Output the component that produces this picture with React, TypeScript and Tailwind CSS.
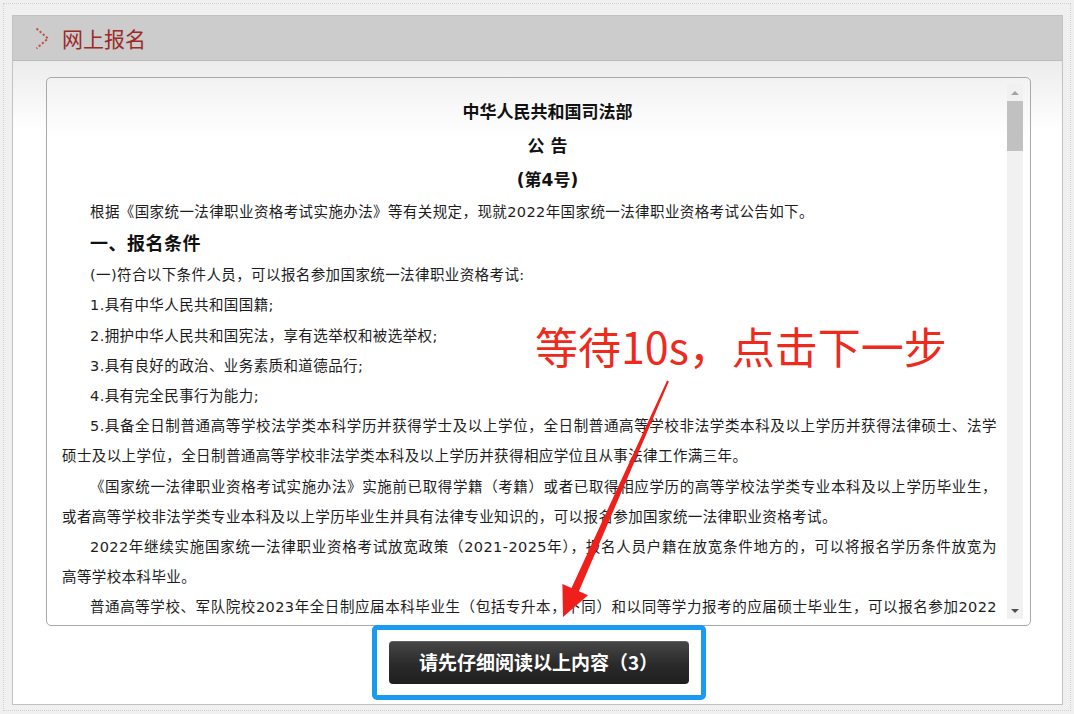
import React from 'react';

const body = "font-['DejaVu_Sans','Noto_Sans_CJK_SC',sans-serif]";

// a line that is justified edge to edge (the line before a wrap)
const Full: React.FC<{ children: React.ReactNode; indent?: boolean }> = ({ children, indent }) => (
  <div className={`text-justify [text-align-last:justify] ${indent ? 'indent-[28px]' : ''}`}>{children}</div>
);

const Line: React.FC<{ children: React.ReactNode; indent?: boolean }> = ({ children, indent }) => (
  <div className={indent ? 'indent-[28px]' : ''}>{children}</div>
);

const Chevron = () => (
  <svg width="15" height="23" viewBox="0 0 15 23" fill="none">
    <polyline points="1.5,1.5 13,11.5 1.5,21.5" stroke="#c0504a" strokeWidth="2" strokeDasharray="2.2 2" />
  </svg>
);

const Scrollbar = () => (
  <div className="w-[16px] shrink-0 bg-[#f1f1f1] flex flex-col items-center">
    <div className="h-[17px] w-full flex items-center justify-center">
      <div className="w-0 h-0 border-l-[4px] border-r-[4px] border-b-[4px] border-l-transparent border-r-transparent border-b-[#a3a3a3]" />
    </div>
    <div className="w-full h-[50px] bg-[#c1c1c1]" />
    <div className="flex-1" />
    <div className="h-[17px] w-full flex items-center justify-center">
      <div className="w-0 h-0 border-l-[4px] border-r-[4px] border-t-[4px] border-l-transparent border-r-transparent border-t-[#505050]" />
    </div>
  </div>
);

export default function App() {
  return (
    <div className="relative w-[1074px] h-[714px] overflow-hidden bg-[#f0f0f0] p-[3px]">
      <div className="h-full border border-dotted border-[#d2d2d2] pl-[8px] pr-[7px] pt-[11px] pb-[5px]">
        <div className="h-full flex flex-col border border-[#c2c2c2] bg-white">
          {/* header */}
          <div className="h-[45px] shrink-0 bg-[#cccccc] border-b border-[#bababa] flex items-center gap-[12px] pl-[22px]">
            <Chevron />
            <span className="font-['Noto_Sans_CJK_SC',sans-serif] text-[21px] leading-none text-[#9a2b29]">网上报名</span>
          </div>

          {/* body */}
          <div className="flex-1 flex flex-col items-center bg-[linear-gradient(#ececec,#ffffff_70px)] pl-[33px] pr-[31px] pt-[16px]">
            <div className="w-full h-[549px] flex border border-[#a9a9a9] rounded-[5px] bg-[linear-gradient(#f2f2f2,#ffffff_60px)] pt-[6px] pb-[6px] pl-[6px] pr-[7px]">
              <div className={`flex-1 min-w-0 overflow-hidden pl-[9px] pr-[10px] pt-[11px] ${body} text-[14.5px] leading-[30.2px] tracking-[0.4px] text-[#1c1c1c]`}>
                <div className="pl-[36px] text-center font-bold text-[17px] leading-[34px] text-[#111] tracking-normal">
                  <div>中华人民共和国司法部</div>
                  <div>公 告</div>
                  <div>(第4号)</div>
                </div>
                <Line indent>根据《国家统一法律职业资格考试实施办法》等有关规定，现就2022年国家统一法律职业资格考试公告如下。</Line>
                <div className="indent-[28px] font-bold text-[18px] leading-[33px] text-[#111] tracking-[0.5px]">一、报名条件</div>
                <Line indent>(一)符合以下条件人员，可以报名参加国家统一法律职业资格考试:</Line>
                <Line indent>1.具有中华人民共和国国籍;</Line>
                <Line indent>2.拥护中华人民共和国宪法，享有选举权和被选举权;</Line>
                <Line indent>3.具有良好的政治、业务素质和道德品行;</Line>
                <Line indent>4.具有完全民事行为能力;</Line>
                <Full indent>5.具备全日制普通高等学校法学类本科学历并获得学士及以上学位，全日制普通高等学校非法学类本科及以上学历并获得法律硕士、法学</Full>
                <Line>硕士及以上学位，全日制普通高等学校非法学类本科及以上学历并获得相应学位且从事法律工作满三年。</Line>
                <Full indent>《国家统一法律职业资格考试实施办法》实施前已取得学籍（考籍）或者已取得相应学历的高等学校法学类专业本科及以上学历毕业生，</Full>
                <Line>或者高等学校非法学类专业本科及以上学历毕业生并具有法律专业知识的，可以报名参加国家统一法律职业资格考试。</Line>
                <Full indent>2022年继续实施国家统一法律职业资格考试放宽政策（2021-2025年），报名人员户籍在放宽条件地方的，可以将报名学历条件放宽为</Full>
                <Line>高等学校本科毕业。</Line>
                <Full indent>普通高等学校、军队院校2023年全日制应届本科毕业生（包括专升本，下同）和以同等学力报考的应届硕士毕业生，可以报名参加2022</Full>
              </div>
              <Scrollbar />
            </div>

            <div className="relative mt-[15px]">
              <div className="absolute -left-[17px] -right-[17px] -top-[16px] -bottom-[16px] border-[5px] border-[#1b9af2] rounded-[5px]" />
              <button className="relative w-[300px] h-[43px] rounded-[4px] bg-[linear-gradient(#474747,#2a2a2a_55%,#1f1f1f)] shadow-[inset_0_1px_0_rgba(255,255,255,0.15)] font-['Noto_Sans_CJK_SC',sans-serif] font-bold text-[19px] text-white">
                请先仔细阅读以上内容（3）
              </button>
            </div>
          </div>
        </div>
      </div>

      {/* annotation */}
      <div className="absolute left-[535px] top-[315px] font-['Noto_Sans_CJK_SC',sans-serif] text-[43px] leading-[60px] text-[#ee2a1d] whitespace-nowrap">
        等待10s，点击下一步
      </div>
      <svg className="absolute left-[550px] top-[375px]" width="130" height="250" viewBox="0 0 130 250">
        <polygon
          points="117.1,5.6 118.9,6.4 28.9,216.2 38,220.3 13,242 12.4,208.9 21.5,213"
          fill="#ef1f1b"
        />
      </svg>
    </div>
  );
}
